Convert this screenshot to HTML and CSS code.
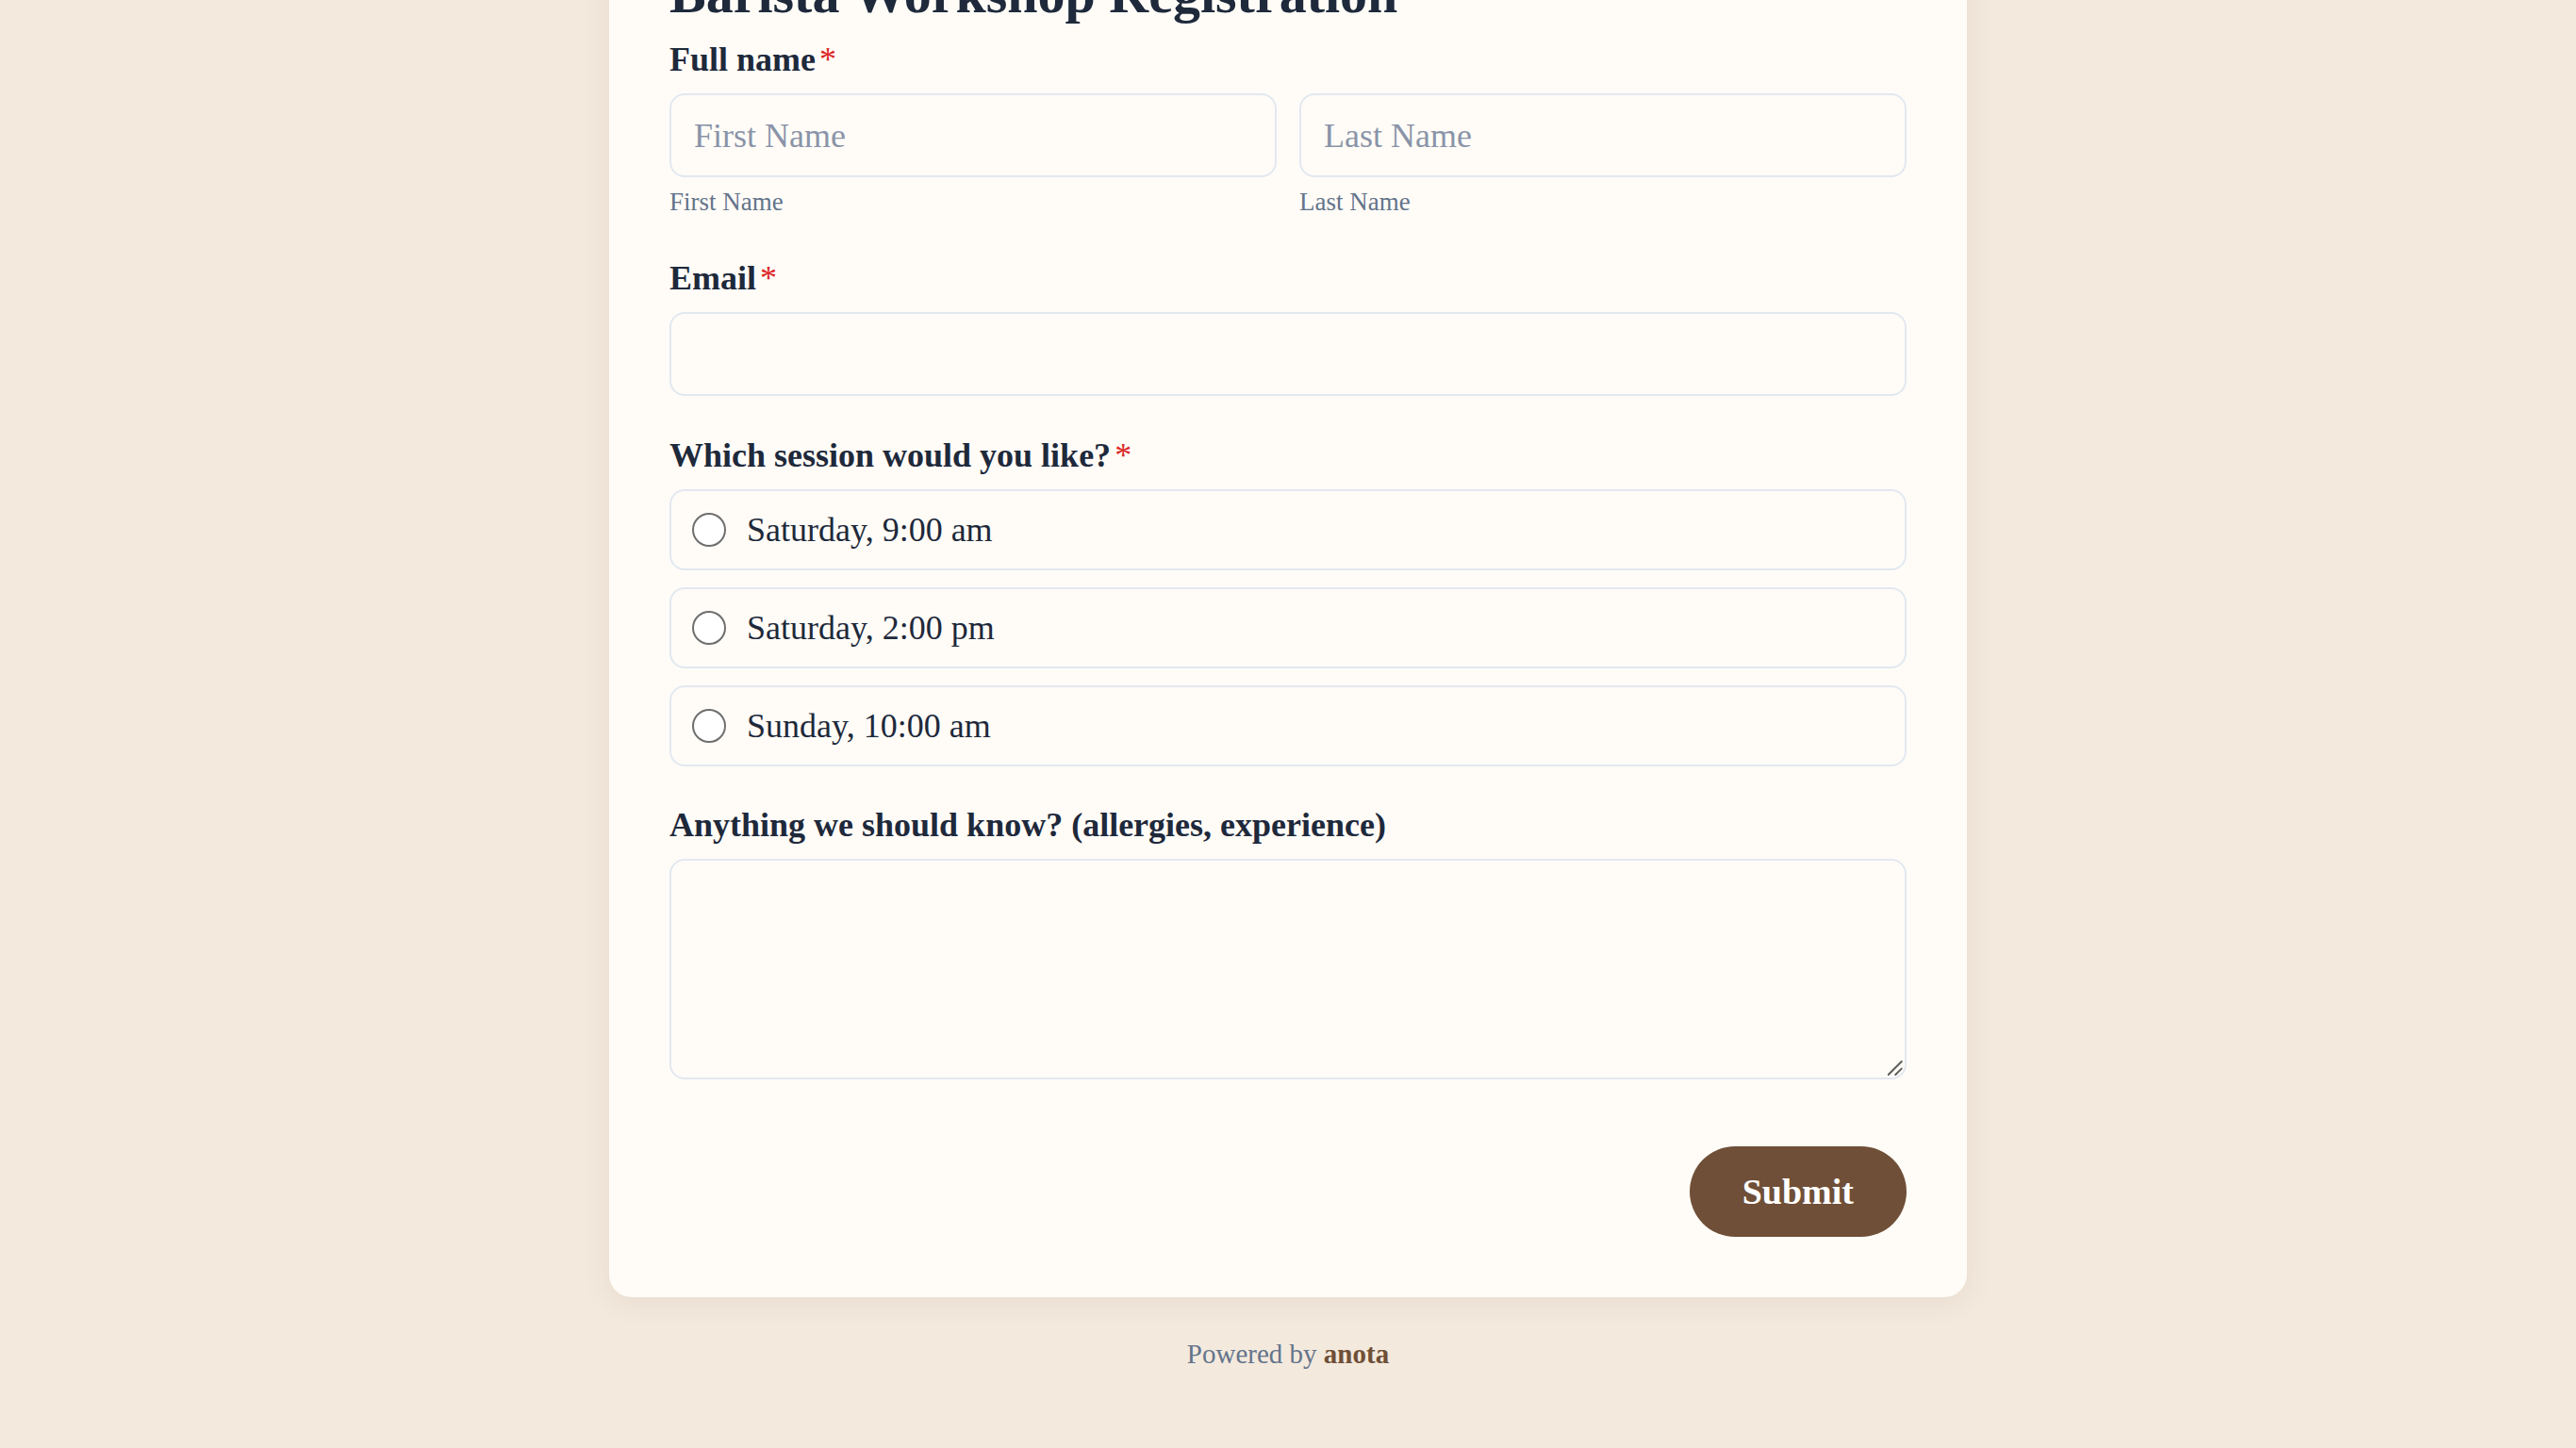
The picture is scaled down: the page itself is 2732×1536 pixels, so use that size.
FILE: index.html
```html
<!DOCTYPE html>
<html lang="en">
<head>
<meta charset="utf-8">
<title>Barista Workshop Registration</title>
<link rel="stylesheet" href="styles.css">
</head>
<body>
<main class="page">
  <form class="card">
    <h1 class="title">Barista Workshop Registration</h1>

    <div class="field field-first">
      <div class="label">Full name<span class="req">*</span></div>
      <div class="name-row">
        <div class="name-col">
          <input class="input" type="text" placeholder="First Name">
          <div class="sublabel">First Name</div>
        </div>
        <div class="name-col">
          <input class="input" type="text" placeholder="Last Name">
          <div class="sublabel">Last Name</div>
        </div>
      </div>
    </div>

    <div class="field field-email">
      <div class="label">Email<span class="req">*</span></div>
      <input class="input" type="email">
    </div>

    <div class="field field-session">
      <div class="label">Which session would you like?<span class="req">*</span></div>
      <div class="options">
        <label class="option"><input class="radio" type="radio" name="session"><span>Saturday, 9:00 am</span></label>
        <label class="option"><input class="radio" type="radio" name="session"><span>Saturday, 2:00 pm</span></label>
        <label class="option"><input class="radio" type="radio" name="session"><span>Sunday, 10:00 am</span></label>
      </div>
    </div>

    <div class="field field-notes">
      <div class="label">Anything we should know? (allergies, experience)</div>
      <div class="textarea-wrap">
        <textarea class="textarea"></textarea>
        <svg class="grip" width="16" height="16" viewBox="0 0 16 16" aria-hidden="true">
          <path d="M0.7 15 L14.7 1 M8.3 15 L14.7 8.6" stroke="#5f5f5f" stroke-width="2" stroke-linecap="round" fill="none"/>
        </svg>
      </div>
    </div>

    <div class="actions">
      <button class="submit" type="button">Submit</button>
    </div>
  </form>
  <footer class="footer">Powered by <strong class="brand">anota</strong></footer>
</main>
</body>
</html>
```

FILE: styles.css
```css
* {
  box-sizing: border-box;
}

html, body {
  margin: 0;
  padding: 0;
}

body {
  background: #f3e9dd;
  font-family: "Liberation Serif", "Times New Roman", serif;
  color: #1e293b;
  overflow: hidden;
}

.page {
  display: flex;
  flex-direction: column;
  align-items: center;
}

.card {
  width: 1440px;
  margin-top: -102px;
  padding: 64px 64px 64px;
  background: #fffcf7;
  border-radius: 24px;
  box-shadow: 0 4px 32px rgba(90, 60, 30, 0.08);
}

.title {
  margin: 0 0 13px;
  font-size: 58px;
  line-height: 64px;
  font-weight: 700;
  color: #1e293b;
}

.field {
  margin-top: 40px;
}

.field-first {
  margin-top: 0;
}

.field-session {
  margin-top: 39px;
}

.field-notes {
  margin-top: 38px;
}

.label {
  font-size: 36px;
  line-height: 48px;
  font-weight: 700;
  color: #1e293b;
  margin-bottom: 12px;
}

.req {
  color: #dc2626;
  margin-left: 4px;
  font-weight: 400;
}

.name-row {
  display: grid;
  grid-template-columns: 1fr 1fr;
  gap: 24px;
}

.input {
  display: block;
  width: 100%;
  height: 89px;
  padding: 0 24px;
  border: 2px solid #e2e8f0;
  border-radius: 16px;
  background: #fffcf7;
  font-family: inherit;
  font-size: 36px;
  color: #1e293b;
  outline: none;
}

.input::placeholder {
  color: #8a94a8;
}

.sublabel {
  margin-top: 10px;
  font-size: 27px;
  line-height: 33px;
  color: #64748b;
}

.options {
  display: flex;
  flex-direction: column;
  gap: 18px;
}

.option {
  display: flex;
  align-items: center;
  gap: 22px;
  height: 86px;
  padding: 0 22px;
  border: 2px solid #e2e8f0;
  border-radius: 16px;
  font-size: 36px;
  color: #1e293b;
}

.radio {
  appearance: none;
  -webkit-appearance: none;
  margin: 0;
  width: 36px;
  height: 36px;
  flex: none;
  border: 2px solid #6f6f6f;
  border-radius: 50%;
  background: #ffffff;
}

.textarea-wrap {
  position: relative;
}

.textarea {
  display: block;
  width: 100%;
  height: 234px;
  padding: 20px 24px;
  border: 2px solid #e2e8f0;
  border-radius: 16px;
  background: #fffcf7;
  font-family: inherit;
  font-size: 36px;
  outline: none;
  resize: none;
}

.grip {
  position: absolute;
  right: 4px;
  bottom: 4px;
}

.actions {
  display: flex;
  justify-content: flex-end;
  margin-top: 71px;
}

.submit {
  height: 96px;
  padding: 0 56px;
  border: none;
  border-radius: 48px;
  background: #6f4f37;
  color: #ffffff;
  font-family: inherit;
  font-size: 38px;
  font-weight: 700;
}

.footer {
  padding-top: 40px;
  font-size: 29px;
  line-height: 40px;
  color: #64748b;
  text-align: center;
}

.brand {
  color: #6f4f37;
  font-weight: 700;
}
```
